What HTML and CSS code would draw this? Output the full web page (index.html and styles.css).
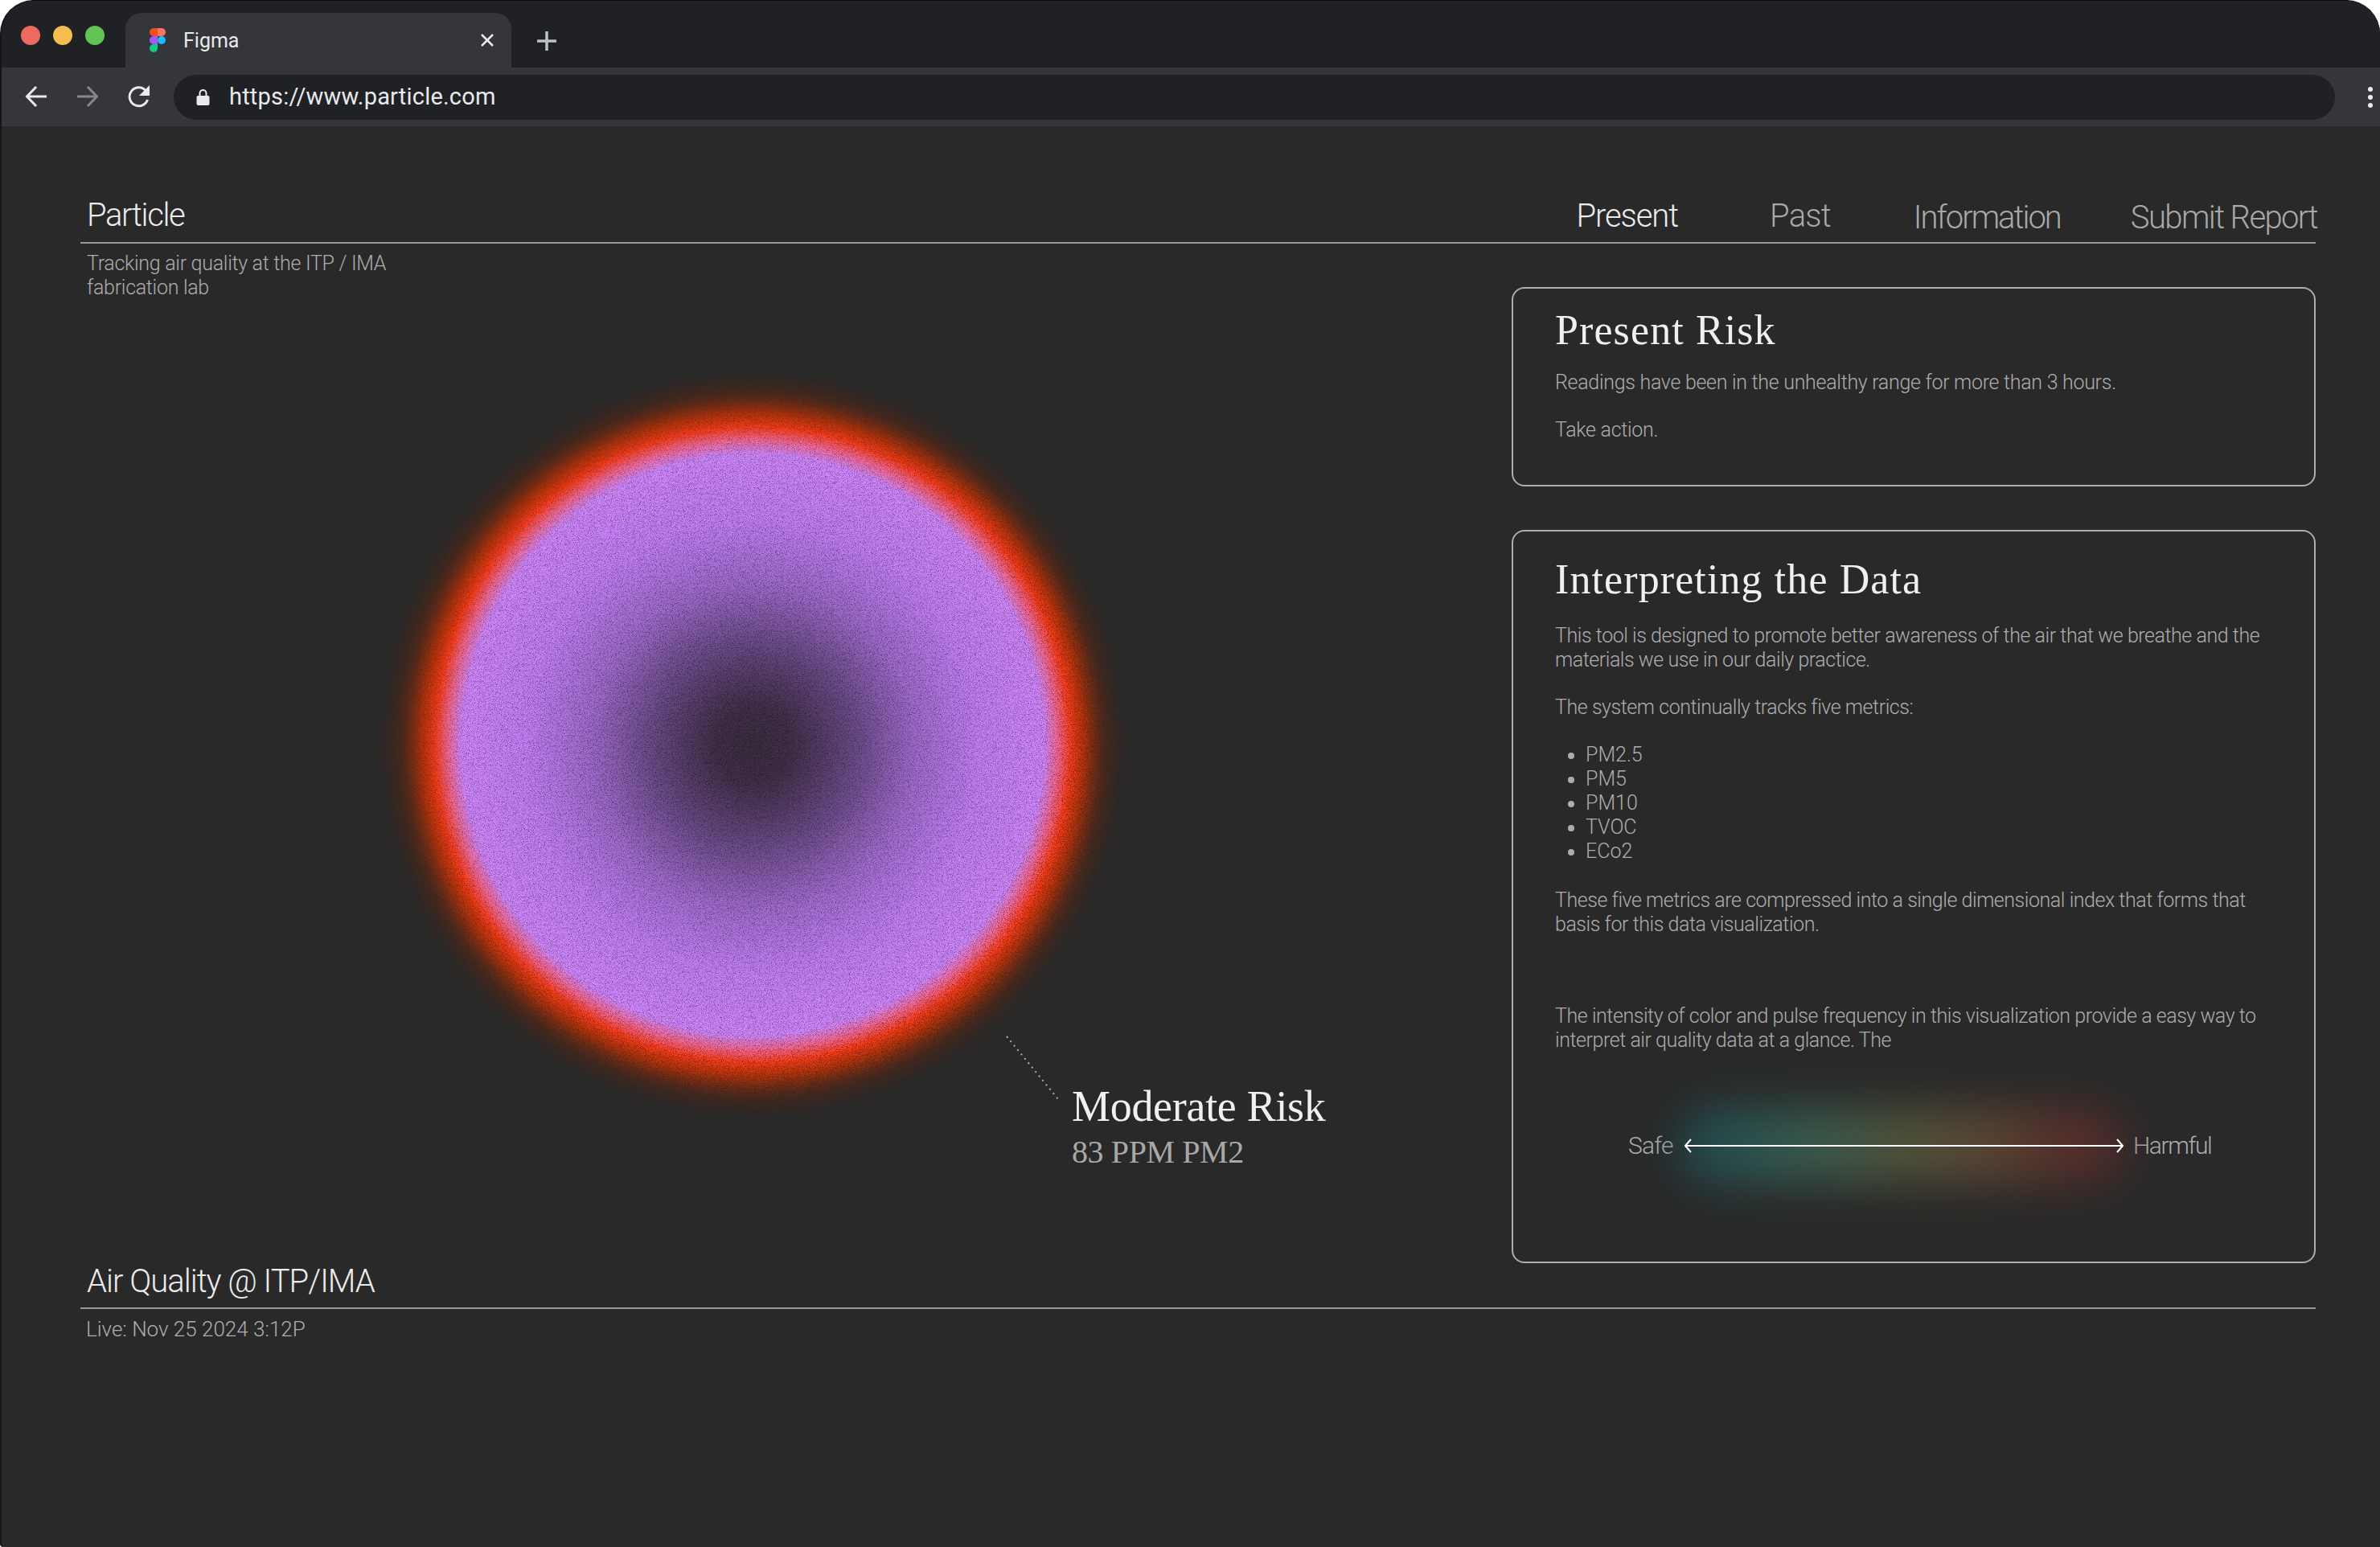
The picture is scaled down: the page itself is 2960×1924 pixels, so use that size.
FILE: index.html
```html
<!DOCTYPE html>
<html lang="en">
<head>
<meta charset="utf-8">
<title>Particle</title>
<link rel="stylesheet" href="styles.css">
</head>
<body>
<div class="window">
  <header class="tabstrip">
    <div class="lights"><i class="light red"></i><i class="light amber"></i><i class="light green"></i></div>
    <div class="tab">
      <svg class="favicon" viewBox="0 0 20 30" aria-hidden="true">
        <path fill="#f24e1e" d="M0 5a5 5 0 0 1 5-5h5v10H5a5 5 0 0 1-5-5z"/>
        <path fill="#ff7262" d="M10 0h5a5 5 0 0 1 0 10h-5z"/>
        <path fill="#a259ff" d="M0 15a5 5 0 0 1 5-5h5v10H5a5 5 0 0 1-5-5z"/>
        <circle fill="#1abcfe" cx="15" cy="15" r="5"/>
        <path fill="#0acf83" d="M0 25a5 5 0 0 1 5-5h5v5a5 5 0 0 1-10 0z"/>
      </svg>
      <span class="tab-title">Figma</span>
      <svg class="tab-close" viewBox="0 0 18 18" aria-hidden="true"><path d="M2 2l14 14M16 2L2 16"/></svg>
    </div>
    <svg class="new-tab" viewBox="0 0 24 24" aria-hidden="true"><path d="M12 1v22M1 12h22"/></svg>
  </header>
  <div class="toolbar">
    <svg class="nav-icon" viewBox="0 0 28 28" aria-hidden="true"><path d="M27 14H3M14 2L2.500 14 14 26"/></svg>
    <svg class="nav-icon dim" viewBox="0 0 28 28" aria-hidden="true"><path d="M1 14h24M14 2l11.500 12L14 26"/></svg>
    <svg class="nav-icon reload" viewBox="0 0 28 28" aria-hidden="true"><path d="M24.500 18a11.500 11.500 0 1 1-2-11"/><path class="solid" d="M27 0v13H14z"/></svg>
    <div class="address">
      <svg class="lock" viewBox="0 0 16 20" aria-hidden="true"><path d="M2 8h1V5a5 5 0 0 1 10 0v3h1a2 2 0 0 1 2 2v8a2 2 0 0 1-2 2H2a2 2 0 0 1-2-2v-8a2 2 0 0 1 2-2zm3 0h6V5a3 3 0 0 0-6 0z"/></svg>
      <span class="url">https://www.particle.com</span>
    </div>
    <div class="kebab"><i></i><i></i><i></i></div>
  </div>
  <main class="page">
    <div class="topbar">
      <div class="brand">Particle</div>
      <nav class="nav">
        <a class="active">Present</a>
        <a class="past">Past</a>
        <a class="info">Information</a>
        <a class="submit">Submit Report</a>
      </nav>
    </div>
    <div class="content">
      <section class="left">
        <p class="tagline">Tracking air quality at the ITP / IMA<br>fabrication lab</p>
        <div class="orb-stage">
          <svg class="orb" viewBox="0 0 1000 1000" aria-hidden="true">
            <defs>
              <radialGradient id="orbfill" gradientUnits="userSpaceOnUse" cx="500" cy="500" r="490">
                <stop offset="0" stop-color="#3c2e42"/>
                <stop offset=".1" stop-color="#42304a"/>
                <stop offset=".27" stop-color="#6c4c8a"/>
                <stop offset=".43" stop-color="#a26cd0"/>
                <stop offset=".6" stop-color="#c580f8"/>
                <stop offset=".77" stop-color="#d288ff"/>
                <stop offset=".805" stop-color="#f66a98"/>
                <stop offset=".84" stop-color="#fc3e1c"/>
                <stop offset=".875" stop-color="#e03804" stop-opacity=".76"/>
                <stop offset=".93" stop-color="#7e2a0c" stop-opacity=".38"/>
                <stop offset="1" stop-color="#3a2a20" stop-opacity="0"/>
              </radialGradient>
              <filter id="grain" x="0" y="0" width="100%" height="100%" color-interpolation-filters="sRGB">
                <feTurbulence type="fractalNoise" baseFrequency="1.1" numOctaves="2" seed="4" result="n"/>
                <feDisplacementMap in="SourceGraphic" in2="n" scale="18" xChannelSelector="R" yChannelSelector="G" result="d"/>
                <feColorMatrix in="n" type="matrix" values="0 0 0 0 0 0 0 0 0 0 0 0 0 0 0 .8 .8 0 0 -.72" result="dark"/>
                <feComposite in="dark" in2="d" operator="in" result="darkIn"/>
                <feMerge><feMergeNode in="d"/><feMergeNode in="darkIn"/></feMerge>
              </filter>
            </defs>
            <circle cx="500" cy="500" r="495" fill="url(#orbfill)" filter="url(#grain)"/>
          </svg>
          <svg class="leader" viewBox="0 0 66 80" aria-hidden="true"><path d="M1 1l64 78"/></svg>
          <div class="reading">
            <div class="reading-title">Moderate Risk</div>
            <div class="reading-value">83 PPM PM2</div>
          </div>
        </div>
      </section>
      <aside class="right">
        <article class="card risk">
          <h2>Present Risk</h2>
          <p>Readings have been in the unhealthy range for more than 3 hours.</p>
          <p>Take action.</p>
        </article>
        <article class="card data">
          <h2>Interpreting the Data</h2>
          <p>This tool is designed to promote better awareness of the air that we breathe and the materials we use in our daily practice.</p>
          <p>The system continually tracks five metrics:</p>
          <ul>
            <li>PM2.5</li>
            <li>PM5</li>
            <li>PM10</li>
            <li>TVOC</li>
            <li>ECo2</li>
          </ul>
          <p>These five metrics are compressed into a single dimensional index that forms that basis for this data visualization.</p>
          <p class="gap">The intensity of color and pulse frequency in this visualization provide a easy way to interpret air quality data at a glance. The</p>
          <div class="scale">
            <span class="safe">Safe</span>
            <div class="scale-track">
              <div class="scale-glow"></div>
              <svg class="scale-arrow" viewBox="0 0 546 20" aria-hidden="true"><path d="M1 10h544M8 2l-7 8 7 8M538 2l7 8-7 8"/></svg>
            </div>
            <span class="harm">Harmful</span>
          </div>
        </article>
      </aside>
    </div>
    <footer class="foot">
      <div class="foot-title">Air Quality @ ITP/IMA</div>
      <div class="foot-live">Live: Nov 25 2024 3:12P</div>
    </footer>
  </main>
</div>
</body>
</html>
```
FILE: styles.css
```css
* { box-sizing: border-box; }
html, body { margin: 0; height: 100%; }
body { background: #fff; font-family: Roboto, "Liberation Sans", sans-serif; }
.window { width: 2960px; height: 1924px; background: #292929; border-radius: 42px 42px 0 4px; overflow: hidden; border-top: 1px solid #0a0a0a; border-left: 2px solid #151515; display: flex; flex-direction: column; }

.tabstrip { height: 83px; background: #202124; display: flex; align-items: flex-end; flex: none; }
.lights { display: flex; gap: 16px; width: 154px; padding: 0 0 28px 24px; align-self: flex-end; }
.light { width: 24px; height: 24px; border-radius: 50%; display: block; }
.red { background: #ee6a5f; }
.amber { background: #f5bd4f; }
.green { background: #61c454; }
.tab { width: 480px; height: 68px; background: #35363a; border-radius: 20px 20px 0 0; display: flex; align-items: center; padding: 0 21px 0 30px; position: relative; }
.favicon { width: 20px; height: 30px; margin-right: 22px; flex: none; }
.tab-title { color: #e8eaed; font-family: Roboto, sans-serif; font-size: 25px; flex: 1; }
.tab-close { width: 18px; height: 18px; fill: none; stroke: #e8eaed; stroke-width: 2.500; }
.new-tab { width: 24px; height: 24px; margin: 0 0 21px 32px; fill: none; stroke: #bdc1c6; stroke-width: 3.500; stroke-linecap: round; align-self: flex-end; }

.toolbar { height: 73px; background: #35363a; display: flex; align-items: center; flex: none; padding-left: 29px; position: relative; }
.nav-icon { width: 28px; height: 28px; margin: -2px 36px 0 0; fill: none; stroke: #e8eaed; stroke-width: 3; flex: none; }
.nav-icon.dim { stroke: #85878b; }
.nav-icon.reload { margin-right: 29px; }
.nav-icon .solid { fill: #e8eaed; stroke: none; }
.address { width: 2688px; height: 56px; background: #202124; border-radius: 28px; display: flex; align-items: center; padding-left: 28px; flex: none; }
.lock { width: 17px; height: 20px; fill: #e8eaed; margin-right: 24px; flex: none; }
.url { color: #e8eaed; font-family: Roboto, sans-serif; font-size: 29px; letter-spacing: .2px; margin-top: -2px; }
.kebab { display: flex; flex-direction: column; gap: 4px; margin-left: 41px; }
.kebab i { display: block; width: 6px; height: 6px; border-radius: 50%; background: #e8eaed; }

.page { flex: 1; padding: 0 80px 0 98px; color: #adadad; font-size: 25px; line-height: 30px; font-weight: 300; letter-spacing: -.29px; }
.topbar { height: 146px; border-bottom: 2px solid #979797; display: flex; justify-content: space-between; align-items: flex-start; padding: 0 0 0 8px; }
.brand { color: #ececec; font-size: 40px; line-height: 48px; margin-top: 87px; letter-spacing: -1.4px; }
.nav { display: flex; margin-right: -2px; }
.nav a { color: #a8a8a8; font-size: 40px; line-height: 48px; margin-top: 90px; }
.nav .active { color: #ececec; margin-top: 88px; letter-spacing: -1.1px; }
.nav .past { margin: 88px 0 0 114px; letter-spacing: -.8px; }
.nav .info { margin-left: 103px; letter-spacing: -2px; }
.nav .submit { margin-left: 87px; letter-spacing: -1.6px; }

.content { display: flex; justify-content: space-between; height: 1269px; }
.left { width: 1700px; position: relative; padding: 10px 0 0 8px; }
.tagline { margin: 0; width: 480px; }
.orb-stage { position: relative; }
.orb { position: absolute; left: 348px; top: 73px; width: 960px; height: 960px; }
.leader { position: absolute; left: 1143px; top: 915px; width: 66px; height: 80px; fill: none; stroke: #b0b0b0; stroke-width: 2; stroke-dasharray: 2 5; }
.reading { position: absolute; left: 1225px; top: 972px; }
.reading-title { font-family: "Liberation Serif", serif; font-weight: 400; color: #f0f0f0; font-size: 54px; line-height: 63px; letter-spacing: -.3px; }
.reading-value { font-family: "Liberation Serif", serif; font-weight: 400; color: #a8a8a8; font-size: 40px; line-height: 50px; letter-spacing: -.4px; }

.right { width: 1000px; padding-top: 54px; display: flex; flex-direction: column; gap: 54px; }
.card { border: 2px solid #adadad; border-radius: 16px; padding: 0 52px; }
.card h2 { margin: 0; font-family: "Liberation Serif", serif; font-weight: 400; color: #f0f0f0; font-size: 52px; line-height: 60px; letter-spacing: 1.1px; }
.card p { margin: 0 0 29px; }
.risk { height: 248px; padding-top: 22px; }
.risk h2 { margin-bottom: 20px; }
.data { height: 912px; padding-top: 30px; position: relative; }
.data h2 { margin-bottom: 25px; }
.data p { letter-spacing: -.45px; }
.data ul { margin: 0 0 31px; padding: 0 0 0 38px; letter-spacing: 0; }
.data .gap { margin-top: 84px; }

.scale { display: flex; align-items: center; position: absolute; left: 143px; top: 746px; }
.scale span { font-size: 30px; line-height: 36px; letter-spacing: -.8px; }
.scale .harm { letter-spacing: -1.4px; }
.safe { width: 70px; }
.scale-track { width: 546px; height: 20px; margin-right: 12px; position: relative; }
.scale-glow { position: absolute; left: -6px; right: 0; top: -36px; height: 92px; border-radius: 46px; background: linear-gradient(90deg, #1a575e, #3e6a5a 30%, #5e5f3e 52%, #6a4e36 70%, #642f2b 88%); filter: blur(28px); opacity: .76; }
.scale-arrow { position: absolute; inset: 0; width: 546px; height: 20px; fill: none; stroke: #fff; stroke-width: 2; }

.foot-title { color: #ececec; font-size: 40px; line-height: 44px; letter-spacing: -1px; border-bottom: 2px solid #979797; padding: 0 0 7px 8px; height: 56px; }
.foot-live { padding: 0 0 0 7px; font-size: 26px; line-height: 30px; margin-top: 10px; letter-spacing: 0; }
```
